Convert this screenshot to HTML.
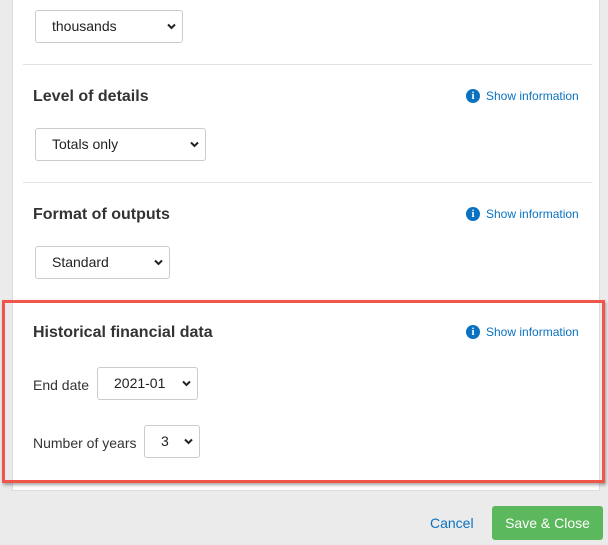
<!DOCTYPE html>
<html><head><style>
body{margin:0;width:608px;height:545px;background:#ebebeb;font-family:"Liberation Sans",sans-serif;position:relative;overflow:hidden}
.panel{position:absolute;left:12px;top:0;width:586px;height:490px;background:#fff;border-left:1px solid #ddd;border-right:1px solid #ddd;border-bottom:1px solid #ddd}
.a{position:absolute}
.sel{position:absolute;border:1px solid #ccc;border-radius:3px;background:#fff;font-size:14px;color:#222;box-sizing:border-box;height:33px;line-height:31px;padding-left:16px}
.sel svg{position:absolute;right:6px;top:12px}
.hr{position:absolute;left:23px;width:569px;height:1px;background:#e2e2e2}
h3{position:absolute;margin:0;font-size:16px;font-weight:bold;color:#333;left:33px}
.info{position:absolute;left:466px;font-size:12px;color:#0a72c1;line-height:14px}
.info i{display:inline-block;width:14px;height:14px;border-radius:50%;background:#0a72c1;color:#fff;font-style:normal;font-weight:bold;font-size:11px;text-align:center;line-height:14px;margin-right:6px;vertical-align:top;font-family:"Liberation Serif",serif}
.lbl{position:absolute;font-size:14px;color:#333}
</style></head><body>
<div class="panel"></div>
<div class="sel" style="left:35px;top:10px;width:148px">thousands<svg width="9" height="7" viewBox="0 0 9 7"><path d="M1 1.5l3.5 3.5 3.5-3.5" stroke="#222" stroke-width="2" fill="none"/></svg></div>
<div class="hr" style="top:64px"></div>
<h3 style="top:88px">Level of details</h3>
<div class="info" style="top:89px"><i>i</i>Show information</div>
<div class="sel" style="left:35px;top:128px;width:171px">Totals only<svg width="9" height="7" viewBox="0 0 9 7"><path d="M1 1.5l3.5 3.5 3.5-3.5" stroke="#222" stroke-width="2" fill="none"/></svg></div>
<div class="hr" style="top:182px"></div>
<h3 style="top:206px">Format of outputs</h3>
<div class="info" style="top:207px"><i>i</i>Show information</div>
<div class="sel" style="left:35px;top:246px;width:135px">Standard<svg width="9" height="7" viewBox="0 0 9 7"><path d="M1 1.5l3.5 3.5 3.5-3.5" stroke="#222" stroke-width="2" fill="none"/></svg></div>
<div class="a" style="left:2px;top:300px;width:597px;height:177px;border:3px solid #f0574a;box-shadow:1px 2px 3px rgba(0,0,0,.35)"></div>
<h3 style="top:324px">Historical financial data</h3>
<div class="info" style="top:325px"><i>i</i>Show information</div>
<div class="lbl" style="left:33px;top:377px">End date</div>
<div class="sel" style="left:97px;top:367px;width:101px">2021-01<svg width="9" height="7" viewBox="0 0 9 7"><path d="M1 1.5l3.5 3.5 3.5-3.5" stroke="#222" stroke-width="2" fill="none"/></svg></div>
<div class="lbl" style="left:33px;top:435px">Number of years</div>
<div class="sel" style="left:144px;top:425px;width:56px">3<svg width="9" height="7" viewBox="0 0 9 7"><path d="M1 1.5l3.5 3.5 3.5-3.5" stroke="#222" stroke-width="2" fill="none"/></svg></div>
<div class="a" style="left:430px;top:515px;font-size:14px;color:#0a72c1">Cancel</div>
<div class="a" style="left:492px;top:506px;width:111px;height:34px;background:#5cb85c;border-radius:3px;color:#fff;font-size:14px;text-align:center;line-height:34px">Save &amp; Close</div>
</body></html>
